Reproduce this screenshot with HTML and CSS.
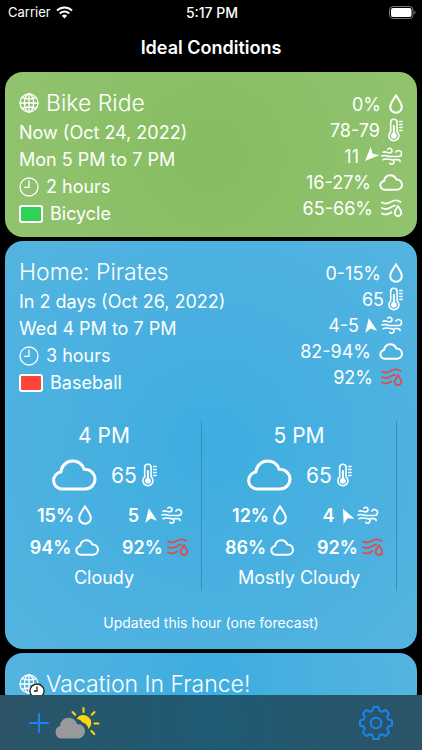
FILE: index.html
```html
<!DOCTYPE html>
<html lang="en">

<head>
    <meta charset="UTF-8">
    <meta name="viewport" content="width=device-width, initial-scale=1.0">
    <title>Ideal Conditions</title>
    <link rel="stylesheet" href="styles.css">
</head>

<body>
    <!-- Shared icons -->
    <svg class="sprite" aria-hidden="true">
        <symbol id="globe" viewBox="0 0 20 20">
            <circle cx="10" cy="10" r="9" />
            <ellipse cx="10" cy="10" rx="4.6" ry="9" />
            <path d="M10 1v18M1 10h18M3.2 4.6q6.8 2.8 13.6 0M3.2 15.4q6.8-2.8 13.6 0" />
        </symbol>
        <symbol id="clock" viewBox="0 0 20 20">
            <circle cx="10" cy="10" r="9" />
            <path d="M10 4v6.3H5.5" />
        </symbol>
        <symbol id="drop" viewBox="0 0 14 20">
            <path d="M7 1.2C5.6 4.6 1.2 8.6 1.2 12.9a5.8 5.8 0 0 0 11.6 0C12.8 8.6 8.4 4.6 7 1.2z" />
        </symbol>
        <symbol id="thermometer" viewBox="0 0 15 24">
            <path d="M2.7 13.9V4.4a3.2 3.2 0 0 1 6.4 0v9.5a5 5 0 1 1-6.4 0z" />
            <path d="M5.9 8v8" class="mercury" />
            <circle cx="5.9" cy="17.8" r="2.9" class="solid" />
            <path d="M11.6 3.5h2.6M11.6 6.5h2.6M11.6 9.5h2.6M11.6 12.5h2.6" class="fine" />
        </symbol>
        <symbol id="wind" viewBox="0 0 22 18">
            <path d="M2 5.2c2.2-1.2 4 .7 6.8.7a2.3 2.3 0 1 0-1.9-3.7" />
            <path d="M1 9c3-1.6 5.5.5 9 .5h7.6a3 3 0 1 0-2.7-4.4" />
            <path d="M2 12.7c3-1.5 5-.1 8.6-.1a2.3 2.3 0 1 1-1.8 3.7" />
            <path d="M13.5 12.6h3.2c1.6 0 2.4.8 2.4 2" />
        </symbol>
        <symbol id="cloud" viewBox="0 0 46 32">
            <path d="M11 30a8.5 8.5 0 0 1-1.2-16.900C10.600 6.500 15.400 2 21.500 2c5.500 0 9.800 3.200 11.600 8.200C39.500 10.200 44 14.500 44 20.100 44 25.700 39.600 30 34 30z" />
        </symbol>
        <symbol id="humidity" viewBox="0 0 22 18">
            <path d="M1 3.5c3 1.8 6 1 9-.8s6-2 9.500.2M1 9c3 1.800 6 1 9-.8 1.800-1.100 2.700-1.500 4-1.600M1 14.500c3 1.800 6 1.200 9.500-1.200" />
            <path d="M17 7c-.9 2.300-3.300 4.200-3.300 6.700a3.300 3.300 0 0 0 6.600 0c0-2.500-2.400-4.400-3.300-6.700z" />
        </symbol>
        <symbol id="arrow" viewBox="0 0 14 14">
            <path d="M7 0l6 14-6-3.500L1 14z" class="solid" />
        </symbol>
    </svg>

    <header class="status-bar">
        <span class="carrier">Carrier
            <svg class="wifi" viewBox="0 0 17 13" aria-hidden="true">
                <path d="M1 4.5a10.6 10.6 0 0 1 15 0M3.800 7.500a6.700 6.700 0 0 1 9.400 0" />
                <path d="M8.500 12.500l-2.600-2.800a3.800 3.800 0 0 1 5.200 0z" class="solid" />
            </svg>
        </span>
        <time class="clock-time">5:17 PM</time>
        <svg class="battery" viewBox="0 0 27 13" aria-hidden="true">
            <rect x="0.5" y="0.5" width="23.5" height="12" rx="3.5" class="shell" />
            <rect x="2" y="2" width="20.5" height="9" rx="2" class="charge" />
            <path d="M25.3 4.500v4q1.200-.6 1.200-2t-1.200-2z" class="tip" />
        </svg>
    </header>
    <h1 class="nav-title">Ideal Conditions</h1>

    <main class="cards">
        <article class="card card-green">
            <div class="summary">
                <div class="details">
                    <h2><svg class="icon small-round"><use href="#globe" /></svg>Bike Ride</h2>
                    <p>Now (Oct 24, 2022)</p>
                    <p>Mon 5 PM to 7 PM</p>
                    <p><svg class="icon small-round"><use href="#clock" /></svg>2 hours</p>
                    <p><span class="swatch swatch-green"></span>Bicycle</p>
                </div>
                <ul class="ranges">
                    <li>0% <svg class="icon drop"><use href="#drop" /></svg></li>
                    <li>78-79 <svg class="icon thermometer"><use href="#thermometer" /></svg></li>
                    <li class="tight">11 <svg class="icon arrow southwest"><use href="#arrow" /></svg><svg class="icon wind"><use href="#wind" /></svg></li>
                    <li>16-27% <svg class="icon cloud"><use href="#cloud" /></svg></li>
                    <li>65-66% <svg class="icon humidity"><use href="#humidity" /></svg></li>
                </ul>
            </div>
        </article>

        <article class="card card-blue">
            <div class="summary">
                <div class="details">
                    <h2>Home: Pirates</h2>
                    <p>In 2 days (Oct 26, 2022)</p>
                    <p>Wed 4 PM to 7 PM</p>
                    <p><svg class="icon small-round"><use href="#clock" /></svg>3 hours</p>
                    <p><span class="swatch swatch-red"></span>Baseball</p>
                </div>
                <ul class="ranges">
                    <li>0-15% <svg class="icon drop"><use href="#drop" /></svg></li>
                    <li class="tight">65 <svg class="icon thermometer"><use href="#thermometer" /></svg></li>
                    <li class="tight">4-5 <svg class="icon arrow north"><use href="#arrow" /></svg><svg class="icon wind"><use href="#wind" /></svg></li>
                    <li>82-94% <svg class="icon cloud"><use href="#cloud" /></svg></li>
                    <li>92% <svg class="icon humidity alert"><use href="#humidity" /></svg></li>
                </ul>
            </div>

            <div class="hours">
                <section class="hour">
                    <h3>4 PM</h3>
                    <div class="sky">
                        <svg class="icon big-cloud"><use href="#cloud" /></svg>
                        <span class="temp">65 <svg class="icon thermometer"><use href="#thermometer" /></svg></span>
                    </div>
                    <div class="stats">
                        <span>15% <svg class="icon drop"><use href="#drop" /></svg></span>
                        <span>5 <svg class="icon arrow north"><use href="#arrow" /></svg><svg class="icon wind"><use href="#wind" /></svg></span>
                        <span>94% <svg class="icon cloud"><use href="#cloud" /></svg></span>
                        <span>92% <svg class="icon humidity alert"><use href="#humidity" /></svg></span>
                    </div>
                    <p>Cloudy</p>
                </section>
                <section class="hour">
                    <h3>5 PM</h3>
                    <div class="sky">
                        <svg class="icon big-cloud"><use href="#cloud" /></svg>
                        <span class="temp">65 <svg class="icon thermometer"><use href="#thermometer" /></svg></span>
                    </div>
                    <div class="stats">
                        <span>12% <svg class="icon drop"><use href="#drop" /></svg></span>
                        <span>4 <svg class="icon arrow northwest"><use href="#arrow" /></svg><svg class="icon wind"><use href="#wind" /></svg></span>
                        <span>86% <svg class="icon cloud"><use href="#cloud" /></svg></span>
                        <span>92% <svg class="icon humidity alert"><use href="#humidity" /></svg></span>
                    </div>
                    <p>Mostly Cloudy</p>
                </section>
            </div>
            <p class="updated">Updated this hour (one forecast)</p>
        </article>

        <article class="card card-blue">
            <div class="summary">
                <div class="details">
                    <h2>
                        <span class="badged">
                            <svg class="icon small-round"><use href="#globe" /></svg>
                            <svg class="badge" viewBox="0 0 16 16" aria-hidden="true">
                                <circle cx="8" cy="8" r="7" />
                                <path d="M8 3.5V8H5" />
                            </svg>
                        </span>Vacation In France!
                    </h2>
                </div>
            </div>
        </article>
    </main>

    <footer class="toolbar">
        <button type="button" class="add" aria-label="Add">
            <svg viewBox="0 0 20 20"><path d="M10 1v18M1 10h18" /></svg>
        </button>
        <button type="button" class="weather" aria-label="Weather">
            <svg viewBox="0 0 46 32">
                <path d="M29.5 1v4M18.5 5l2.7 2.8M40.5 5l-2.8 2.8M40.5 16.500h4M37.300 24l3 3" class="rays" />
                <path d="M22.5 11.800a8 8 0 1 1 12 10.300c-.7-3.500-2.800-5.700-6-6.500-1.400-2.200-3.400-3.400-6-3.800z" class="sun" />
                <path d="M7 31.500a6.400 6.400 0 0 1-1-12.400C6.500 14 10 10.800 14.500 10.800c4 0 7.200 2.200 8.600 6.200 4.600.1 7.900 3.100 7.900 7.200s-3.200 7.300-7.400 7.300z" class="puff" />
            </svg>
        </button>
        <button type="button" class="settings" aria-label="Settings">
            <svg viewBox="0 0 34 34">
                <path d="M14.5 1L19.5 1 20.5 4.7 23.2 5.8 26.5 3.9 30.1 7.5 28.2 10.8 29.3 13.5 33 14.5 33 19.5 29.3 20.5 28.2 23.2 30.1 26.5 26.5 30.1 23.2 28.2 20.5 29.3 19.5 33 14.5 33 13.5 29.3 10.8 28.2 7.5 30.1 3.9 26.5 5.8 23.2 4.7 20.5 1 19.5 1 14.5 4.7 13.5 5.8 10.8 3.9 7.5 7.5 3.9 10.8 5.8 13.5 4.7z" />
                <circle cx="17" cy="17" r="5.3" />
            </svg>
        </button>
    </footer>
</body>

</html>
```

FILE: styles.css
```css
* {
    box-sizing: border-box;
}

body {
    display: flex;
    flex-direction: column;
    height: 100vh;
    margin: 0;
    overflow: hidden;
    background-color: #000;
    color: #fff;
    font-family: Inter, "Liberation Sans", sans-serif;
    font-size: 18px;
}

h1,
h2,
h3,
p,
ul {
    margin: 0;
    padding: 0;
    font-weight: 400;
}

.sprite {
    display: none;
}

.solid {
    fill: currentColor;
    stroke: none;
}

/* Status bar */
.status-bar {
    display: grid;
    grid-template-columns: 1fr auto 1fr;
    align-items: center;
    height: 24px;
    padding: 0 6px 0 8px;
    font-size: 13px;
}

.carrier {
    display: flex;
    align-items: center;
    gap: 5px;
}

.wifi {
    width: 17px;
    height: 13px;
    fill: none;
    stroke: currentColor;
    stroke-width: 2;
}

.clock-time {
    font-size: 14px;
    font-weight: 500;
}

.battery {
    justify-self: end;
    width: 27px;
    height: 13px;
}

.shell {
    fill: none;
    stroke: #777;
}

.charge {
    fill: #fff;
}

.tip {
    fill: #777;
}

.nav-title {
    height: 48px;
    font-size: 18px;
    font-weight: 600;
    line-height: 48px;
    text-align: center;
}

/* Cards */
.cards {
    display: flex;
    flex: 1;
    flex-direction: column;
    gap: 4px;
    min-height: 0;
    padding: 0 5px;
    overflow: hidden;
}

.card {
    flex-shrink: 0;
    padding: 15px 0 10px;
    border-radius: 18px;
}

.card-green {
    background: radial-gradient(circle at center, #86bd60, #92c370);
}

.card-blue {
    background: radial-gradient(circle at center, #3dade0, #55b4e0);
}

.summary {
    display: flex;
    justify-content: space-between;
    padding: 0 14px;
}

.details h2,
.details p {
    display: flex;
    align-items: center;
    gap: 7px;
    line-height: 27px;
}

.details h2 {
    font-size: 23px;
    font-weight: 300;
    line-height: 32px;
}

.ranges {
    list-style: none;
    padding-top: 4px;
}

.ranges li {
    display: flex;
    align-items: center;
    justify-content: flex-end;
    gap: 8px;
    height: 26px;
}

.ranges .tight {
    gap: 4px;
}

/* Icons */
.icon {
    flex-shrink: 0;
    fill: none;
    stroke: currentColor;
    stroke-width: 2;
    stroke-linecap: round;
    stroke-linejoin: round;
}

.small-round {
    width: 20px;
    height: 20px;
    stroke-width: 1.3;
}

.drop {
    width: 14px;
    height: 20px;
}

.thermometer {
    width: 15px;
    height: 24px;
    stroke-width: 1.6;
}

.mercury {
    stroke-width: 2;
}

.fine {
    stroke-width: 1.3;
}

.wind {
    width: 22px;
    height: 18px;
    stroke-width: 1.6;
}

.cloud {
    width: 24px;
    height: 17px;
    stroke-width: 4;
}

.humidity {
    width: 22px;
    height: 18px;
    stroke-width: 1.8;
}

.arrow {
    width: 14px;
    height: 14px;
}

.north {
    transform: rotate(-10deg);
}

.northwest {
    transform: rotate(-26deg);
}

.southwest {
    transform: rotate(225deg);
}

.alert {
    color: #e24a4a;
}

.swatch {
    width: 24px;
    height: 18px;
    border: 2px solid #fff;
    border-radius: 3px;
}

.swatch-green {
    background-color: #30d158;
}

.swatch-red {
    background-color: #ff453a;
}

/* Hourly forecast */
.hours {
    display: flex;
    margin-top: 25px;
    padding-left: 2px;
    overflow: hidden;
}

.hour {
    flex: 0 0 195px;
    height: 170px;
    border-right: 1px solid #3c8db5;
    text-align: center;
}

.hour h3 {
    font-size: 21px;
    line-height: 30px;
}

.sky {
    display: flex;
    align-items: center;
    justify-content: center;
    gap: 14px;
    height: 48px;
}

.big-cloud {
    width: 46px;
    height: 32px;
    stroke-width: 3;
}

.temp {
    display: flex;
    align-items: center;
    gap: 5px;
    font-size: 21px;
}

.stats {
    display: grid;
    grid-template-columns: 1fr 1fr;
    padding-left: 12px;
    font-weight: 600;
}

.stats span {
    display: flex;
    align-items: center;
    justify-content: center;
    gap: 4px;
    height: 32px;
}

.hour p {
    line-height: 30px;
}

.updated {
    margin-top: 22px;
    margin-bottom: 6px;
    font-size: 14px;
    line-height: 20px;
    text-align: center;
}

.badged {
    position: relative;
    display: flex;
}

.badge {
    position: absolute;
    top: 9px;
    left: 10px;
    width: 16px;
    height: 16px;
    fill: #fff;
    stroke: #222;
    stroke-width: 1.3;
}

/* Toolbar */
.toolbar {
    display: flex;
    align-items: center;
    height: 55px;
    padding: 0 29px;
    background: radial-gradient(circle at center, #1f5a74, #2b5466);
}

.toolbar button {
    display: flex;
    padding: 0;
    border: none;
    background: none;
    color: #1b82f0;
    cursor: pointer;
}

.toolbar svg {
    fill: none;
    stroke: currentColor;
    stroke-width: 2;
    stroke-linejoin: round;
    stroke-linecap: round;
}

.add svg {
    width: 20px;
    height: 20px;
}

.weather {
    margin-left: 5px;
}

.weather svg {
    width: 46px;
    height: 32px;
}

.toolbar .rays {
    stroke: #ffd60a;
}

.toolbar .sun {
    fill: #ffd60a;
    stroke: none;
}

.toolbar .puff {
    fill: #98989d;
    stroke: none;
}

.settings {
    margin-left: auto;
}

.settings svg {
    width: 34px;
    height: 34px;
}
```
